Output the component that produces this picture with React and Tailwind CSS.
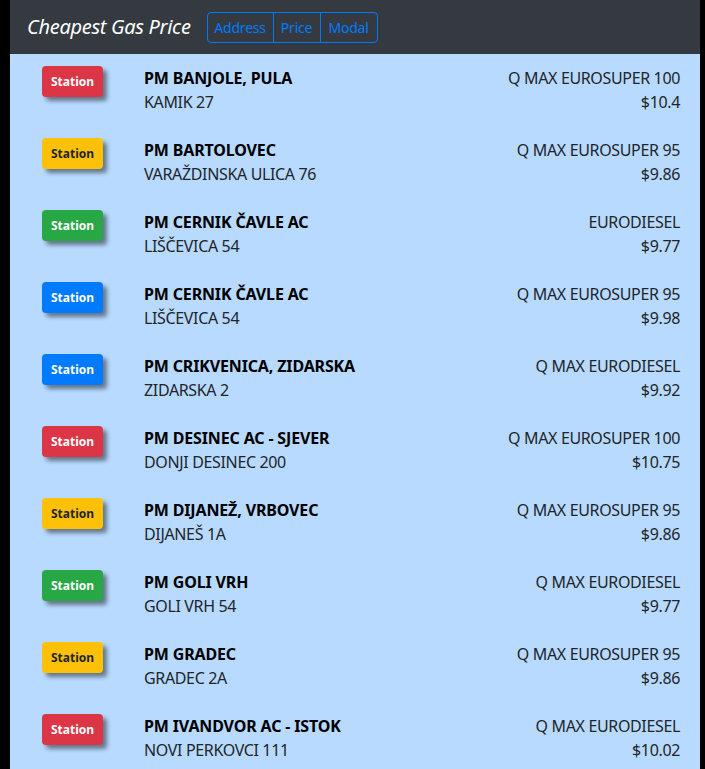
import React from "react";

const rows = [
  ["red", "PM BANJOLE, PULA", "KAMIK 27", "Q MAX EUROSUPER 100", "$10.4"],
  ["yellow", "PM BARTOLOVEC", "VARAŽDINSKA ULICA 76", "Q MAX EUROSUPER 95", "$9.86"],
  ["green", "PM CERNIK ČAVLE AC", "LIŠČEVICA 54", "EURODIESEL", "$9.77"],
  ["blue", "PM CERNIK ČAVLE AC", "LIŠČEVICA 54", "Q MAX EUROSUPER 95", "$9.98"],
  ["blue", "PM CRIKVENICA, ZIDARSKA", "ZIDARSKA 2", "Q MAX EURODIESEL", "$9.92"],
  ["red", "PM DESINEC AC - SJEVER", "DONJI DESINEC 200", "Q MAX EUROSUPER 100", "$10.75"],
  ["yellow", "PM DIJANEŽ, VRBOVEC", "DIJANEŠ 1A", "Q MAX EUROSUPER 95", "$9.86"],
  ["green", "PM GOLI VRH", "GOLI VRH 54", "Q MAX EURODIESEL", "$9.77"],
  ["yellow", "PM GRADEC", "GRADEC 2A", "Q MAX EUROSUPER 95", "$9.86"],
  ["red", "PM IVANDVOR AC - ISTOK", "NOVI PERKOVCI 111", "Q MAX EURODIESEL", "$10.02"],
];

const badge = {
  red: "bg-[#dc3545] text-white",
  yellow: "bg-[#ffc107] text-[#212529]",
  green: "bg-[#28a745] text-white",
  blue: "bg-[#007bff] text-white",
};

export default function App() {
  return (
    <div
      className="bg-black pl-[10px] pr-[5px] h-[769px] overflow-hidden"
      style={{ fontFamily: '"Noto Sans", "Open Sans", sans-serif' }}
    >
      <div className="h-[54px] bg-[#343a40] flex items-center pl-[17px]">
        <span className="text-white italic text-[20px] leading-none tracking-[-0.3px]">Cheapest Gas Price</span>
        <div className="ml-[16px] flex h-[31px] border border-[#007bff] rounded-[4px] text-[#007bff] text-[14px] tracking-[-0.2px]">
          <span className="w-[66px] flex items-center justify-center border-r border-[#007bff]">Address</span>
          <span className="w-[47px] flex items-center justify-center border-r border-[#007bff]">Price</span>
          <span className="w-[56px] flex items-center justify-center">Modal</span>
        </div>
      </div>
      <div className="bg-[#b8daff]">
        {rows.map(([c, name, addr, fuel, price], i) => (
          <div key={i} className="flex h-[72px] pt-[12px] pl-[32px] pr-[20px] text-[16px] leading-[24px] text-[#212529] tracking-[-0.35px]">
            <div
              className={`w-[61px] h-[31px] rounded-[4px] flex items-center justify-center text-[12px] font-bold tracking-normal shadow-[4px_4px_4px_rgba(0,0,0,0.45)] ${badge[c]}`}
            >
              Station
            </div>
            <div className="ml-[41px] flex-1">
              <div className="font-bold text-black tracking-[-0.15px]">{name}</div>
              <div>{addr}</div>
            </div>
            <div className="text-right">
              <div>{fuel}</div>
              <div>{price}</div>
            </div>
          </div>
        ))}
      </div>
    </div>
  );
}
